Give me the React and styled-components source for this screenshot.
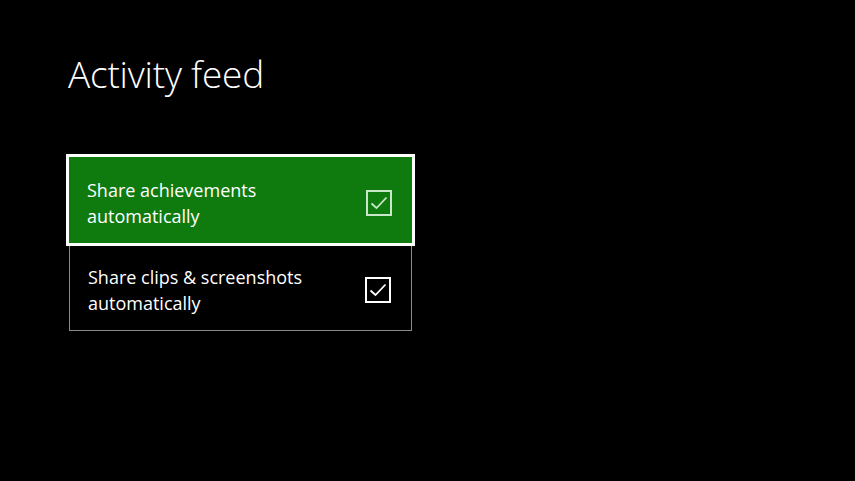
import React, { useState } from 'react'
import styled, { createGlobalStyle } from 'styled-components'

const GlobalStyle = createGlobalStyle`
  html, body {
    margin: 0;
    background: #000;
  }
  body {
    font-family: "Open Sans", "Noto Sans", sans-serif;
    color: #fff;
  }
`

const settings = [
  { id: 'achievements', label: 'Share achievements automatically', checked: true },
  { id: 'clips', label: 'Share clips & screenshots automatically', checked: true },
]

function App() {
  const [focused] = useState('achievements')

  return (
    <Page>
      <GlobalStyle />
      <Title>Activity feed</Title>
      <List>
        {settings.map((s) => (
          <Item key={s.id} $focused={focused === s.id}>
            <Label>{s.label}</Label>
            <Check $focused={focused === s.id}>
              {s.checked && (
                <svg width="18" height="14" viewBox="0 0 18 14">
                  <path d="M1.5 7.5 L6.5 12 L16.5 1.5" fill="none" stroke="currentColor" strokeWidth="1.8" />
                </svg>
              )}
            </Check>
          </Item>
        ))}
      </List>
    </Page>
  )
}

const Page = styled.div`
  width: 855px;
  height: 481px;
  box-sizing: border-box;
  padding: 52px 0 0 69px;
`

const Title = styled.h1`
  margin: 0 0 0 -1px;
  font-family: "Open Sans", sans-serif;
  font-weight: 300;
  font-size: 37px;
  line-height: 44px;
  letter-spacing: -0.2px;
`

const List = styled.div`
  margin-top: 61px;
  width: 343px;
  display: flex;
  flex-direction: column;
`

const Item = styled.div`
  height: ${(p) => (p.$focused ? '86px' : '88px')};
  box-sizing: border-box;
  display: flex;
  align-items: center;
  justify-content: space-between;
  padding: 0 20px 0 18px;
  background: ${(p) => (p.$focused ? '#0f7b0f' : '#000')};
  border: ${(p) => (p.$focused ? 'none' : '1px solid #8a8a8a')};
  outline: ${(p) => (p.$focused ? '3px solid #fff' : 'none')};
  position: relative;
  z-index: ${(p) => (p.$focused ? 1 : 0)};
`

const Label = styled.div`
  width: 240px;
  font-size: 18px;
  line-height: 26px;
  padding-top: 5px;
`

const Check = styled.div`
  width: 26px;
  height: 26px;
  margin-top: 6px;
  box-sizing: border-box;
  border: 2px solid ${(p) => (p.$focused ? '#c8e6c8' : '#fff')};
  display: flex;
  align-items: center;
  justify-content: center;
  color: ${(p) => (p.$focused ? '#c8e6c8' : '#fff')};
`

export default App
